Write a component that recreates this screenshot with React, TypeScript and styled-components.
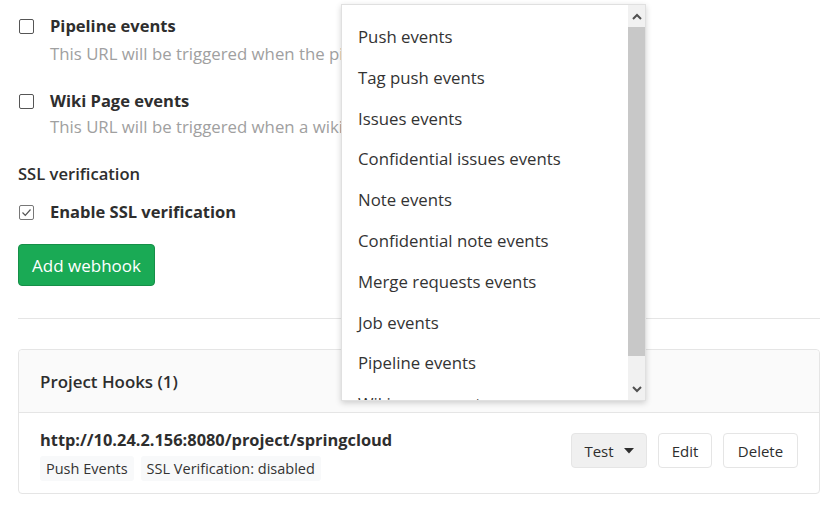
import React from "react";
import styled, { createGlobalStyle } from "styled-components";

const Global = createGlobalStyle`
  html, body { margin: 0; padding: 0; background: #fff; }
  body { font-family: "Open Sans", "Noto Sans", sans-serif; color: #2e2e2e; }
  * { box-sizing: border-box; }
`;

const Page = styled.div`
  position: relative;
  width: 831px;
  height: 506px;
  overflow: hidden;
  padding: 0 11px 0 18px;
`;

const Form = styled.div`
  display: flex;
  flex-direction: column;
`;

const CheckRow = styled.div<{ $top: number }>`
  display: grid;
  grid-template-columns: 32px 1fr;
  margin-top: ${(p) => p.$top}px;
`;

const Box = styled.span<{ $checked?: boolean }>`
  width: 15px;
  height: 15px;
  margin: 4px 0 0 1px;
  border: 1px solid ${(p) => (p.$checked ? "#777" : "#555")};
  border-radius: 2px;
  display: flex;
  align-items: center;
  justify-content: center;
`;

const Label = styled.div`
  font-size: 16.5px;
  font-weight: 700;
  line-height: 22px;
  color: #2e2e2e;
`;

const Help = styled.div<{ $top: number }>`
  grid-column: 2;
  font-size: 16.8px;
  line-height: 22px;
  margin-top: ${(p) => p.$top}px;
  color: #a0a0a0;
  white-space: nowrap;
`;

const Heading = styled.div`
  font-size: 16.6px;
  font-weight: 600;
  line-height: 22px;
  margin-top: 25px;
`;

const GreenButton = styled.button`
  align-self: flex-start;
  margin-top: 21px;
  height: 42px;
  width: 137px;
  padding: 0;
  background: #1aaa55;
  border: 1px solid #168f48;
  border-radius: 4px;
  color: #fff;
  font-family: inherit;
  font-size: 17px;
`;

const Rule = styled.hr`
  margin: 32px 0 0;
  border: none;
  border-top: 1px solid #e5e5e5;
`;

const Card = styled.div`
  margin-top: 30px;
  border: 1px solid #e5e5e5;
  border-radius: 4px;
`;

const CardHeader = styled.div`
  height: 63px;
  background: #fafafa;
  border-bottom: 1px solid #e5e5e5;
  display: flex;
  align-items: center;
  padding-left: 21px;
  font-size: 16.9px;
  font-weight: 600;
  border-radius: 4px 4px 0 0;
`;

const CardBody = styled.div`
  display: flex;
  justify-content: space-between;
  align-items: flex-start;
  padding: 16px 21px 12px 21px;
`;

const HookInfo = styled.div`
  display: flex;
  flex-direction: column;
`;

const HookUrl = styled.div`
  font-size: 16.4px;
  font-weight: 700;
  line-height: 22px;
`;

const Badges = styled.div`
  display: flex;
  gap: 7px;
  margin-top: 5px;
`;

const Badge = styled.span`
  background: #f8f9fa;
  border-radius: 3px;
  padding: 0 6px;
  height: 25px;
  line-height: 25px;
  font-size: 14.5px;
  color: #333;
`;

const Actions = styled.div`
  display: flex;
  gap: 11px;
  margin-top: 4px;
`;

const Btn = styled.button<{ $w: number; $gray?: boolean }>`
  width: ${(p) => p.$w}px;
  height: 35px;
  padding: 0;
  border: 1px solid #e5e5e5;
  border-radius: 4px;
  background: ${(p) => (p.$gray ? "#f0f0f0" : "#fff")};
  font-family: inherit;
  font-size: 15px;
  color: #2e2e2e;
  display: flex;
  align-items: center;
  justify-content: center;
  gap: 10px;
`;

const Dropdown = styled.div`
  position: absolute;
  left: 341px;
  top: 4px;
  width: 305px;
  height: 397px;
  background: #fff;
  border: 1px solid #e0e0e0;
  box-shadow: 0 2px 6px rgba(0, 0, 0, 0.18);
  display: grid;
  grid-template-columns: 1fr 17px;
  overflow: hidden;
`;

const List = styled.ul`
  list-style: none;
  margin: 0;
  padding: 12px 0 0 0;
  overflow: hidden;
`;

const Item = styled.li`
  height: 40.8px;
  line-height: 40.8px;
  padding-left: 16px;
  font-size: 16.8px;
  color: #333;
  white-space: nowrap;
`;

const Scrollbar = styled.div`
  background: #f1f1f1;
  display: grid;
  grid-template-rows: 22px 329px 1fr 22px;
`;

const Arrow = styled.div`
  display: flex;
  align-items: center;
  justify-content: center;
`;

const Thumb = styled.div`
  background: #c8c8c8;
`;

const items = [
  "Push events",
  "Tag push events",
  "Issues events",
  "Confidential issues events",
  "Note events",
  "Confidential note events",
  "Merge requests events",
  "Job events",
  "Pipeline events",
  "Wiki page events",
];

const Check = () => (
  <svg width="11" height="11" viewBox="0 0 11 11">
    <path d="M1.5 5.5 L4.3 8.3 L9.5 2.5" fill="none" stroke="#555" strokeWidth="1.2" />
  </svg>
);

export default function App() {
  return (
    <>
      <Global />
      <Page>
        <Form>
          <CheckRow $top={15}>
            <Box />
            <Label>Pipeline events</Label>
            <Help $top={6}>This URL will be triggered when the pipeline status changes</Help>
          </CheckRow>
          <CheckRow $top={25}>
            <Box />
            <Label>Wiki Page events</Label>
            <Help $top={4}>This URL will be triggered when a wiki page is created/updated</Help>
          </CheckRow>
          <Heading>SSL verification</Heading>
          <CheckRow $top={16}>
            <Box $checked>
              <Check />
            </Box>
            <Label>Enable SSL verification</Label>
          </CheckRow>
          <GreenButton>Add webhook</GreenButton>
          <Rule />
          <Card>
            <CardHeader>Project Hooks (1)</CardHeader>
            <CardBody>
              <HookInfo>
                <HookUrl>http://10.24.2.156:8080/project/springcloud</HookUrl>
                <Badges>
                  <Badge>Push Events</Badge>
                  <Badge>SSL Verification: disabled</Badge>
                </Badges>
              </HookInfo>
              <Actions>
                <Btn $w={76} $gray>
                  Test
                  <svg width="10" height="6" viewBox="0 0 10 6">
                    <path d="M0 0 L10 0 L5 5.5 Z" fill="#2e2e2e" />
                  </svg>
                </Btn>
                <Btn $w={54}>Edit</Btn>
                <Btn $w={75}>Delete</Btn>
              </Actions>
            </CardBody>
          </Card>
        </Form>
        <Dropdown>
          <List>
            {items.map((t) => (
              <Item key={t}>{t}</Item>
            ))}
          </List>
          <Scrollbar>
            <Arrow>
              <svg width="10" height="7" viewBox="0 0 10 7">
                <path d="M1 6 L5 2 L9 6" fill="none" stroke="#505050" strokeWidth="2" />
              </svg>
            </Arrow>
            <Thumb />
            <div />
            <Arrow>
              <svg width="10" height="7" viewBox="0 0 10 7">
                <path d="M1 1 L5 5 L9 1" fill="none" stroke="#505050" strokeWidth="2" />
              </svg>
            </Arrow>
          </Scrollbar>
        </Dropdown>
      </Page>
    </>
  );
}
